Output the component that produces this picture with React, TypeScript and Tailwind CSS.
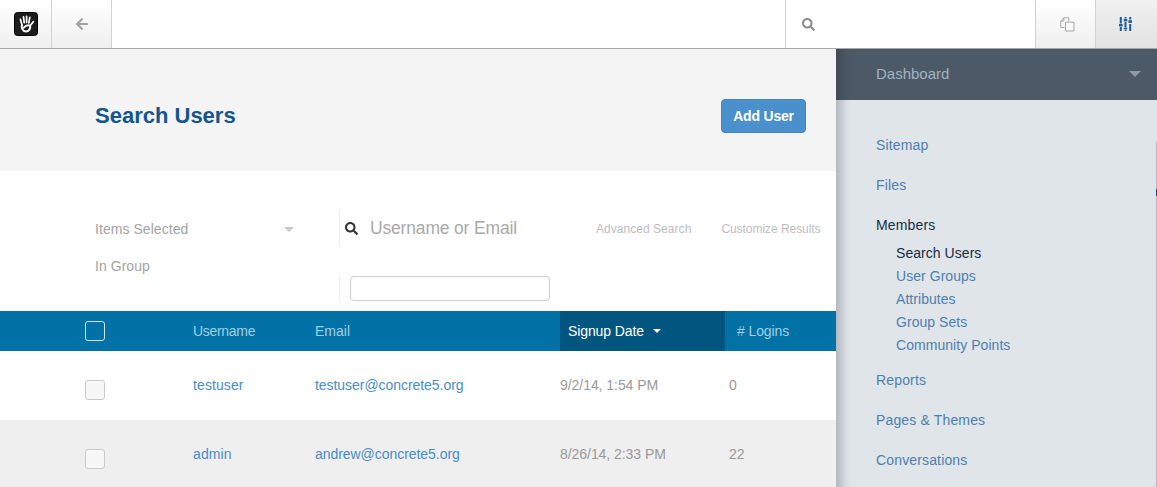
import { FaArrowLeft, FaSearch } from "react-icons/fa";

const navTop = ["Sitemap", "Files"];
const subItems = ["User Groups", "Attributes", "Group Sets", "Community Points"];
const navBottom = ["Reports", "Pages & Themes", "Conversations"];

const users = [
  { name: "testuser", email: "testuser@concrete5.org", date: "9/2/14, 1:54 PM", logins: "0", rowClass: "bg-white h-[69px] pt-[25px]" },
  { name: "admin", email: "andrew@concrete5.org", date: "8/26/14, 2:33 PM", logins: "22", rowClass: "bg-[#efefef] h-[67px] pt-[25px]" },
];

function Logo() {
  return (
    <svg width="24" height="24" viewBox="0 0 24 24">
      <rect x="0.5" y="0.5" width="23" height="23" rx="3" fill="#1c1c1c" stroke="#000" />
      <g fill="none" stroke="#fff" strokeLinecap="round">
        <path d="M6.4 7.2 L7.6 11.5" strokeWidth="1.7" />
        <path d="M9.5 4.8 L10.2 10.6" strokeWidth="1.7" />
        <path d="M12.6 4.4 L12.6 10.4" strokeWidth="1.7" />
        <path d="M15.8 5.4 L14.8 10.8" strokeWidth="1.7" />
        <path d="M19.4 9.6 L16.6 13" strokeWidth="1.7" />
        <path d="M8 12.6 C7 15.5 8.5 19.4 12 19.4 C15 19.4 16.6 16.6 16.2 13.8 C13.8 12.8 11.4 13.8 9.8 15.6" strokeWidth="2" />
      </g>
    </svg>
  );
}

function CopyIcon() {
  return (
    <svg width="15" height="15" viewBox="0 0 15 15" fill="none" stroke="#a8a8a8" strokeWidth="1">
      <path d="M4.5 10.5 H0.8 V4 L3.8 0.8 H8.8 V4.5" />
      <path d="M5.5 5.2 H14 V14 H5.5 Z" fill="#f8f8f8" />
      <path d="M0.8 4 H3.8 V0.8" />
    </svg>
  );
}

function SlidersIcon() {
  return (
    <svg width="13" height="14" viewBox="0 0 13 14" fill="#1a5a9e">
      <rect x="0.8" y="0" width="2" height="6.5" />
      <rect x="0.8" y="10" width="2" height="4" />
      <rect x="0" y="7" width="3.6" height="2.4" />
      <rect x="5.5" y="0" width="2" height="1.5" />
      <rect x="5.5" y="5" width="2" height="5.5" />
      <rect x="5.5" y="12.4" width="2" height="1.6" />
      <rect x="4.7" y="2" width="3.6" height="2.4" />
      <rect x="4.7" y="10.8" width="3.6" height="1.2" />
      <rect x="10.2" y="0" width="2" height="2.5" />
      <rect x="10.2" y="7" width="2" height="7" />
      <rect x="9.4" y="3.3" width="3.6" height="2.6" />
    </svg>
  );
}

function Caret({ className }: { className: string }) {
  return <div className={`w-0 h-0 border-x-transparent border-solid ${className}`} />;
}

export default function App() {
  return (
    <div className="w-[1157px] h-[487px] overflow-hidden bg-white flex flex-col font-['Liberation_Sans',Arial,sans-serif]">
      {/* top bar */}
      <div className="h-[49px] flex shrink-0 border-b border-[#a9a9a9] bg-white">
        <div className="w-[52px] border-r border-[#d2d2d2] flex items-center justify-center pl-[1px] bg-gradient-to-b from-white to-[#efefef]">
          <Logo />
        </div>
        <div className="w-[60px] border-r border-[#d2d2d2] flex items-center justify-center pl-[1px] bg-gradient-to-b from-white to-[#efefef]">
          <FaArrowLeft className="text-[#a2a2a2] text-[14px]" />
        </div>
        <div className="w-[673px]" />
        <div className="w-[250px] border-l border-[#d2d2d2] flex items-center pl-[16px]">
          <FaSearch className="text-[#8c8c8c] text-[13px]" />
        </div>
        <div className="w-[60px] border-l border-[#d2d2d2] flex items-center justify-center pl-[3px] bg-gradient-to-b from-white to-[#efefef]">
          <CopyIcon />
        </div>
        <div className="w-[62px] border-l border-[#d2d2d2] flex items-center justify-center pr-[2px] bg-gradient-to-b from-[#f0f0f0] to-[#e2e2e2]">
          <SlidersIcon />
        </div>
      </div>

      <div className="flex flex-1 min-h-0">
        {/* main column */}
        <div className="w-[836px] shrink-0 flex flex-col">
          <div className="h-[122px] bg-[#f4f4f4] flex items-start justify-between pl-[95px] pr-[30px]">
            <h1 className="text-[22px] font-bold text-[#13558f] leading-[28px] mt-[53px]">Search Users</h1>
            <button className="w-[85px] h-[34px] mt-[50px] rounded-[4px] bg-[#4a90cc] border border-[#4287c3] text-white text-[14px] font-bold tracking-[-0.2px]">
              Add User
            </button>
          </div>

          <div className="h-[140px] bg-white relative">
            <div className="grid grid-cols-[339px_1fr] h-full">
              <div className="pl-[95px] pt-[50px] text-[14px] text-[#a3a3a3] leading-[16px] tracking-[0.05px]">
                <div className="flex items-center justify-between w-[199px]">
                  <span>Items Selected</span>
                  <Caret className="border-x-[5px] border-t-[5px] border-t-[#c8c8c8]" />
                </div>
                <div className="mt-[21px]">In Group</div>
              </div>
              <div className="flex flex-col">
                <div className="h-[75px] pt-[39px] flex items-start">
                  <div className="border-l border-[#eeeeee] h-[36px] pl-[5px] pt-[11px] flex">
                    <FaSearch className="text-[#333] text-[13px] mt-[1px]" />
                  </div>
                  <span className="text-[17.5px] text-[#a9a9a9] ml-[12px] mt-[8px] leading-[20px] tracking-[-0.17px]">Username or Email</span>
                  <span className="text-[12px] text-[#bdbdbd] ml-[79px] mt-[12px] leading-[14px] tracking-[0.05px]">Advanced Search</span>
                  <span className="text-[12px] text-[#bdbdbd] ml-[30px] mt-[12px] leading-[14px] tracking-[-0.05px]">Customize Results</span>
                </div>
                <div className="flex h-[65px] pt-[30px] items-start">
                  <div className="border-l border-[#eeeeee] h-[25px]" />
                  <div className="ml-[10px] w-[200px] h-[25px] border border-[#cfcfcf] rounded-[4px] bg-white" />
                </div>
              </div>
            </div>
          </div>

          {/* table header */}
          <div className="grid grid-cols-[193px_122px_245px_165px_1fr] h-[40px] bg-[#0271a5] text-[14px] text-[#9fd0e6] items-stretch">
            <div className="flex items-center pl-[85px]">
              <div className="w-[20px] h-[20px] rounded-[3px] border border-[#cde3ee]" />
            </div>
            <div className="flex items-center tracking-[-0.3px]">Username</div>
            <div className="flex items-center">Email</div>
            <div className="flex items-center pl-[8px] bg-[#02557e] text-white gap-[9px] tracking-[-0.1px]">
              <span>Signup Date</span>
              <Caret className="border-x-[4px] border-t-[4px] border-t-white" />
            </div>
            <div className="flex items-center pl-[12px] tracking-[-0.1px]">
              <span># Logins</span>
            </div>
          </div>

          {/* table rows */}
          {users.map((user) => (
            <div key={user.name} className={`grid grid-cols-[193px_122px_245px_169px_1fr] text-[14px] leading-[18px] ${user.rowClass}`}>
              <div className="pl-[85px]">
                <div className="w-[20px] h-[20px] mt-[4px] rounded-[3px] border border-[#c9c9c9] bg-[#f7f7f7]" />
              </div>
              <div className="text-[#4a8cc9] tracking-[0.1px]">{user.name}</div>
              <div className="text-[#4a8cc9] tracking-[-0.05px]">{user.email}</div>
              <div className="text-[#999] tracking-[-0.05px]">{user.date}</div>
              <div className="text-[#999]">{user.logins}</div>
            </div>
          ))}
        </div>

        {/* dashboard panel */}
        <div className="relative flex-1 flex flex-col bg-[#e0e5ea] shadow-[inset_14px_0_10px_-8px_rgba(120,125,130,0.45)]">
          <div className="h-[51px] shrink-0 bg-[#4c5a67] shadow-[inset_14px_0_10px_-8px_rgba(40,45,50,0.35)] flex items-center justify-between pl-[40px] pr-[16px] text-[15px] text-[#a3b2c2]">
            <span className="-mt-[1px]">Dashboard</span>
            <Caret className="-mt-[2px] border-x-[6px] border-t-[6px] border-t-[#8e9aa6]" />
          </div>
          <nav className="pl-[40px] pt-[36px] text-[14px] leading-[18px] text-[#4f7fae] tracking-[0.15px]">
            {navTop.map((item) => (
              <div key={item} className="mb-[22px]">{item}</div>
            ))}
            <div className="text-[#172c42] mb-[10px]">Members</div>
            <div className="pl-[20px] flex flex-col gap-[5px] mb-[17px] tracking-[0.05px]">
              <div className="text-[#172c42]">Search Users</div>
              {subItems.map((item) => (
                <div key={item}>{item}</div>
              ))}
            </div>
            {navBottom.map((item) => (
              <div key={item} className="mb-[22px]">{item}</div>
            ))}
          </nav>
          {/* edge of the window behind */}
          <div className="absolute right-0 top-[93px] bottom-0 w-px bg-[#b4b8bc]" />
          <div className="absolute right-0 top-[140px] h-[7px] w-px bg-[#1a4a8c]" />
        </div>
      </div>
    </div>
  );
}
